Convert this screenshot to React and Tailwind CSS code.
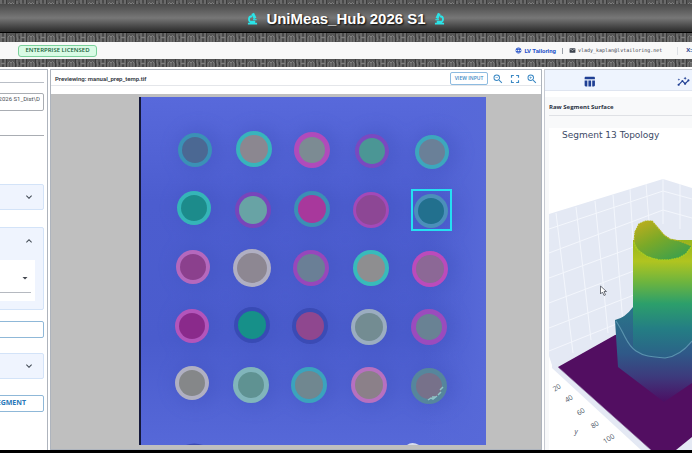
import React from "react";
import {
  MdLanguage,
  MdEmail,
  MdZoomOut,
  MdZoomIn,
  MdFullscreen,
  MdTableChart,
  MdInsights,
  MdExpandMore,
  MdExpandLess,
  MdArrowDropDown,
} from "react-icons/md";

// Each well: centre, outer radius, inner radius, ring colour, core colour
const wells = [
  [56, 53, 17, 13, "#3a91b6", "#4b6893"],
  [115, 52, 18, 14, "#38b4bc", "#8b8790"],
  [173, 53, 18, 13, "#b04bbb", "#7b8b93"],
  [233, 54, 17, 13, "#7a49c0", "#4b9695"],
  [293, 55, 17, 13, "#3da7bd", "#6b8098"],
  [55, 111, 17, 13, "#35b5b8", "#1f8b8b"],
  [114, 113, 18, 14, "#7845bb", "#68a3a5"],
  [173, 112, 18, 14, "#3b8fb5", "#a8389c"],
  [232, 113, 18, 15, "#a348b8", "#8d4795"],
  [292, 114, 17, 13, "#4b8fba", "#20708e"],
  [54, 170, 17, 13, "#b568bd", "#8b418d"],
  [113, 171, 19, 15, "#b0afc2", "#8d8792"],
  [172, 171, 18, 14, "#9747bb", "#6b7f96"],
  [232, 171, 18, 14, "#39bbba", "#8e8e90"],
  [291, 172, 18, 14, "#bb4bbb", "#8c6896"],
  [53, 229, 17, 13, "#b354bb", "#8a2c8b"],
  [113, 228, 18, 14, "#394bb5", "#159089"],
  [171, 229, 18, 14, "#3b4bb5", "#8f478f"],
  [230, 230, 18, 14, "#9badc0", "#738c92"],
  [290, 230, 18, 13, "#9b4bbd", "#698294"],
  [53, 286, 17, 13, "#b0b0c2", "#858789"],
  [112, 288, 18, 13, "#81b5bb", "#5f9292"],
  [170, 288, 18, 14, "#3ba3bd", "#6f8790"],
  [230, 288, 18, 14, "#b76fc0", "#8b8089"],
  [290, 289, 18, 13, "#56869c", "#77718a"],
];

const ticks = [
  [8, 260, "20"],
  [20, 271, "40"],
  [32, 284, "60"],
  [46, 297, "80"],
  [60, 311, "100"],
];

function Weave({ id, className }) {
  return (
    <svg className={"block w-full " + className} aria-hidden="true">
      <defs>
        <pattern id={id} width="20" height="9" patternUnits="userSpaceOnUse">
          <rect width="20" height="9" fill="#555555" />
          <path
            d="M1 0v9M5 0v9M1 4.500h4M8 9V4q1.500-3 3 0v5M11 4q1.500-3 3 0v5M17 1v3q2 2 0 4"
            fill="none"
            stroke="#808080"
            strokeWidth="1"
          />
          <path d="M3 0v3M3 6v3M6.500 0v9M15.500 0v9M19.500 3v3" stroke="#3c3c3c" strokeWidth="1" />
        </pattern>
      </defs>
      <rect width="100%" height="100%" fill={`url(#${id})`} />
    </svg>
  );
}

function Microscope({ className }) {
  return (
    <svg viewBox="0 0 12 14" className={"h-[13px] w-[11px] " + className} fill="none" stroke="#2be4e8" aria-hidden="true">
      <path d="M1 12.500h10M3 10.500h5" strokeWidth="2" />
      <path d="M6.500 4.500c4 0 4.500 5 1 7" strokeWidth="2" />
      <path d="M5.800 1.500 3.200 7" strokeWidth="3.200" />
      <path d="M1.500 8.300h4" strokeWidth="1.200" />
    </svg>
  );
}

function Banner() {
  return (
    <header>
      <Weave id="weaveTop" className="h-1" />
      <div className="flex h-[29px] items-center justify-center gap-2 border-b border-black bg-linear-to-b from-[#4a4a4a] via-[#777777] to-[#2b2b2b]">
        <Microscope className="-scale-x-100" />
        <h1
          className="text-[15px] leading-none font-bold text-white [text-shadow:1px_1px_2px_#000]"
          style={{ fontFamily: '"Liberation Sans", Arial, sans-serif' }}
        >
          UniMeas_Hub 2026 S1
        </h1>
        <Microscope className="" />
      </div>
      <Weave id="weaveMid" className="h-[9px]" />
      <div className="flex h-[17px] items-center justify-between overflow-hidden bg-[#f8f8f8] pl-[18px] text-[6px] whitespace-nowrap">
        <span className="flex h-[12px] w-[79px] items-center justify-center rounded-[3px] border border-[#7bd09b] bg-[#d9fbe5] font-semibold text-[#175f3a]">
          ENTERPRISE LICENSED
        </span>
        <div className="flex items-center">
          <a href="#lv" className="flex items-center gap-[2px] font-bold text-[#2350c8]" style={{ fontFamily: "Roboto, sans-serif" }}>
            <MdLanguage size={7} />
            LV Tailoring
          </a>
          <span className="ml-[6px] h-[6px] w-px bg-[#9aa0a8]" />
          <a
            href="mailto:vlady_kaplan@lvtailoring.net"
            className="ml-[6px] flex items-center gap-[2px] text-[5px] text-[#3c434d]"
          >
            <MdEmail size={7} />
            <span style={{ fontFamily: '"DejaVu Sans Mono", monospace' }}>vlady_kaplan@lvtailoring.net</span>
          </a>
          <span className="ml-[15px] h-[8px] w-px bg-[#dcdfe4]" />
          <span className="ml-[8px] font-bold text-[#2a3f8f]">X:</span>
        </div>
      </div>
      <Weave id="weaveLow" className="h-[8px]" />
    </header>
  );
}

function Sidebar() {
  return (
    <aside className="flex w-12 shrink-0 justify-end overflow-hidden border-t border-r border-[#aeb4bd] bg-white pr-[3px]">
      <div className="flex w-[180px] shrink-0 flex-col text-[6px]">
        <div className="h-[13px] border-b border-[#b9bec6]" />
        <input
          aria-label="Source folder"
          readOnly
          defaultValue="C:\UniMeas_Hub 2026 S1_Dist\D"
          className="mt-[10px] h-[18px] rounded-[2px] border border-[#a9adb3] pr-[3px] pb-[8px] text-right text-[#4a4f57]"
          style={{ fontFamily: "Roboto, sans-serif" }}
        />
        <div className="mt-[24px] border-t border-[#a9adb3]" />
        <button
          aria-label="Expand section"
          className="mt-[48px] flex h-[26px] items-center justify-end rounded-[2px] border border-[#d3e3f8] bg-[#eff4fe] pr-[8px] text-[#424a55]"
        >
          <MdExpandMore size={12} />
        </button>
        <section className="mt-[17px] h-[83px] rounded-[2px] border border-[#d3e3f8] bg-[#eff4fe]">
          <button aria-label="Collapse section" className="flex h-[25px] w-full items-center justify-end pr-[8px] text-[#424a55]">
            <MdExpandLess size={12} />
          </button>
          <div className="mt-[7px] mr-[8px] h-[41px] bg-white pr-[4px]">
            <div className="relative h-[33px] border-b border-[#b5b9c0]">
              <select aria-label="Mode" className="h-full w-full appearance-none bg-transparent">
                <option></option>
              </select>
              <MdArrowDropDown size={12} className="pointer-events-none absolute top-[12px] right-0 text-[#42474f]" />
            </div>
          </div>
        </section>
        <input aria-label="Segment name" className="mt-[11px] h-[17px] rounded-[2px] border border-[#8fb8d8]" />
        <button
          aria-label="Expand options"
          className="mt-[15px] flex h-[26px] items-center justify-end rounded-[2px] border border-[#d3e3f8] bg-[#eff4fe] pr-[8px] text-[#424a55]"
        >
          <MdExpandMore size={12} />
        </button>
        <button className="mt-[16px] h-[17px] rounded-[2px] border border-[#8fb8d8] pr-[17px] text-right text-[7px] font-bold text-[#2878b8]">
          RUN SEGMENT
        </button>
      </div>
    </aside>
  );
}

function Plate() {
  return (
    <svg viewBox="0 0 347 348" className="block h-[348px] w-[347px]" role="img" aria-label="Well plate">
      <defs>
        <linearGradient id="plateBg" x1="0" y1="0" x2="0" y2="1">
          <stop offset="0" stopColor="#5869db" />
          <stop offset="0.300" stopColor="#4c5dcf" />
          <stop offset="0.700" stopColor="#4a5ccd" />
          <stop offset="1" stopColor="#5668d8" />
        </linearGradient>
        <linearGradient id="plateSide" x1="0" y1="0" x2="1" y2="0">
          <stop offset="0.820" stopColor="#5769d8" stopOpacity="0" />
          <stop offset="1" stopColor="#5769d8" />
        </linearGradient>
        <filter id="shade" x="-30%" y="-30%" width="160%" height="160%">
          <feGaussianBlur stdDeviation="8" />
        </filter>
        <filter id="edge" x="-20%" y="-20%" width="140%" height="140%">
          <feGaussianBlur stdDeviation="0.600" />
        </filter>
      </defs>
      <rect width="347" height="348" fill="url(#plateBg)" />
      <rect width="347" height="348" fill="url(#plateSide)" />
      <g filter="url(#shade)" fill="#4051bd" opacity="0.350">
        {wells.map(([x, y], i) => (
          <circle key={i} cx={x + 4} cy={y} r="23" />
        ))}
      </g>
      <g filter="url(#edge)">
        {wells.map(([x, y, R, r, ring, core], i) => (
          <g key={i}>
            <circle cx={x} cy={y} r={R} fill={ring} />
            <circle cx={x} cy={y} r={r} fill={core} />
          </g>
        ))}
      </g>
      <path d="M289 303l3-2 2 1 4-3M299 298l3-3M301 293l3-3M293 300h4" stroke="#8fc4c6" strokeWidth="1.500" fill="none" />
      <rect x="273" y="93" width="39" height="40" fill="none" stroke="#25dff2" strokeWidth="2" />
      <path d="M0 0h2v348H0z" fill="#14183a" />
      <path d="M47 348q8-3 17 0z" fill="#3c4bb4" />
      <path d="M268 348q5-4 12 0z" fill="#d8dcee" />
    </svg>
  );
}

function Preview() {
  return (
    <main className="ml-[2px] flex min-w-0 flex-1 flex-col border border-[#aeb4bd] bg-white">
      <div className="flex h-4 items-center justify-between border-b border-[#e4e6ea] pt-[2px] pr-[3px] pl-1">
        <h2
          className="text-[6px] leading-none font-semibold text-[#2f3540]"
          style={{ fontFamily: "Roboto, sans-serif" }}
        >
          Previewing: manual_prep_temp.tif
        </h2>
        <div className="flex items-center gap-1 text-[#3a88c4]">
          <button className="h-[13px] w-[38px] rounded-[2px] border border-[#8dbbe0] text-[5px] leading-none font-semibold">
            VIEW INPUT
          </button>
          <button aria-label="Zoom out">
            <MdZoomOut size={12} />
          </button>
          <button aria-label="Fit to screen">
            <MdFullscreen size={14} />
          </button>
          <button aria-label="Zoom in">
            <MdZoomIn size={12} />
          </button>
        </div>
      </div>
      <div className="mt-2 flex flex-1 justify-center bg-[#bfbfbf] pt-[3px] pb-1 pl-8">
        <Plate />
      </div>
    </main>
  );
}

function Topology() {
  return (
    <svg viewBox="0 0 143 322" className="block h-[322px] w-[143px]" role="img" aria-label="Segment 13 Topology">
      <defs>
        <linearGradient id="outer" gradientUnits="userSpaceOnUse" x1="0" y1="112" x2="0" y2="230">
          <stop offset="0" stopColor="#96b51c" />
          <stop offset="0.180" stopColor="#b0c420" />
          <stop offset="0.360" stopColor="#6cb43f" />
          <stop offset="0.540" stopColor="#2c9f6b" />
          <stop offset="0.750" stopColor="#247e84" />
          <stop offset="1" stopColor="#2c5f88" />
        </linearGradient>
        <linearGradient id="inner" x1="0" y1="0" x2="0.700" y2="1">
          <stop offset="0" stopColor="#c4ae1c" />
          <stop offset="0.500" stopColor="#7ba928" />
          <stop offset="1" stopColor="#3ea04b" />
        </linearGradient>
        <linearGradient id="base" gradientUnits="userSpaceOnUse" x1="0" y1="185" x2="0" y2="274">
          <stop offset="0" stopColor="#2a7289" />
          <stop offset="0.450" stopColor="#2f5988" />
          <stop offset="0.720" stopColor="#3d3a7c" />
          <stop offset="1" stopColor="#4c0e63" />
        </linearGradient>
      </defs>
      <text x="13" y="10" fontSize="9" fill="#3c4a66" fontFamily="DejaVu Sans, Verdana, sans-serif">
        Segment 13 Topology
      </text>
      <path d="M0 86 114 51 143 60V240H4L0 228z" fill="#e4e9f4" />
      <path d="M0 86 3 240 92 322H143V200H66L20 225z" fill="#e4e9f4" />
      <path d="M0 242v80h90z" fill="#fff" />
      <g stroke="#f3f6fc" strokeWidth="1" fill="none">
        <path d="M0 101 114 63l29 8M0 125l114-43 29 8M0 150l90-33M0 175l90-34M0 200l90-35M0 223l75-30" />
        <path d="M7 85l17 140M27 79l15 133M46 73l13 132M64 67l10 130M81 61l7 120M97 56l4 50M114 51v45M131 56v45" />
      </g>
      <path d="M9 239 66 207 143 190V309L127 322H102z" fill="#520e61" />
      <path d="M9 239 102 322" stroke="#8d6a9d" strokeWidth="0.700" />
      <path d="M66 192q10-2 18-13h59v76L115 274 69 239z" fill="url(#base)" />
      <path d="M84 112v107q4 6 15 9l17 2 15-5 12-12V112z" fill="url(#outer)" />
      <path d="M67 193q4 6 9 16t11 14 12 5 17 2q15-2 27-17" fill="none" stroke="#5a93ae" strokeWidth="1.200" />
      <path
        d="M85 114l1-10 4-8 7-3h6l6 7 6 7 6 4 10 2 12 5-6 8-7 4-10 2H110l-13-4-7-5z"
        fill="url(#inner)"
      />
      <path
        d="M85 114q1 6 5 9t7 5 13 4h10l10-2 7-4 6-8"
        fill="none"
        stroke="#a9cb20"
        strokeWidth="1.500"
        strokeDasharray="2 0.500"
      />
      <path
        d="M85 114l1-10 4-8 7-3h6l6 7 6 7 6 4 10 2 12 5"
        fill="none"
        stroke="#b0b31c"
        strokeWidth="1.200"
        strokeDasharray="2 0.500"
      />
      <g fill="#4a5364" fontSize="7" fontFamily="Open Sans, sans-serif" textAnchor="middle">
        {ticks.map(([x, y, label]) => (
          <text key={label} x={x} y={y + 2} transform={`rotate(-32 ${x} ${y})`}>
            {label}
          </text>
        ))}
        <text x="27" y="306" fontStyle="italic">
          y
        </text>
      </g>
      <path d="M51.500 158v8l2-2 1.500 3.500 1.500-.7-1.500-3.300h2.500z" fill="#fff" stroke="#4d525c" strokeWidth="0.800" />
    </svg>
  );
}

function Analysis() {
  return (
    <section className="ml-[2px] w-[148px] shrink-0 overflow-hidden border-t border-l border-[#c6cad2] bg-[#f8f9fa]">
      <nav className="flex h-[21px] items-center justify-between border-b border-[#dfe5f0] bg-[#eef4fe] pt-[3px] pr-[2px] pl-[38px] text-[#1f3f94]">
        <button aria-label="Table">
          <MdTableChart size={13} />
        </button>
        <button aria-label="Insights">
          <MdInsights size={13} />
        </button>
      </nav>
      <div className="h-[6px] bg-white" />
      <div className="pl-1">
        <h2
          className="h-[19px] border-b border-[#dfe1e5] pt-[6px] text-[6px] leading-[8px] font-bold text-[#283142]"
        >
          Raw Segment Surface
        </h2>
        <div className="mt-3 bg-white">
          <Topology />
        </div>
      </div>
    </section>
  );
}

export default function App() {
  return (
    <div
      className="flex min-h-screen flex-col overflow-hidden border-b-[3px] border-black bg-white"
      style={{ fontFamily: '"Open Sans", "Noto Sans", sans-serif' }}
    >
      <Banner />
      <div className="flex flex-1 pt-[2px]">
        <Sidebar />
        <Preview />
        <Analysis />
      </div>
    </div>
  );
}
